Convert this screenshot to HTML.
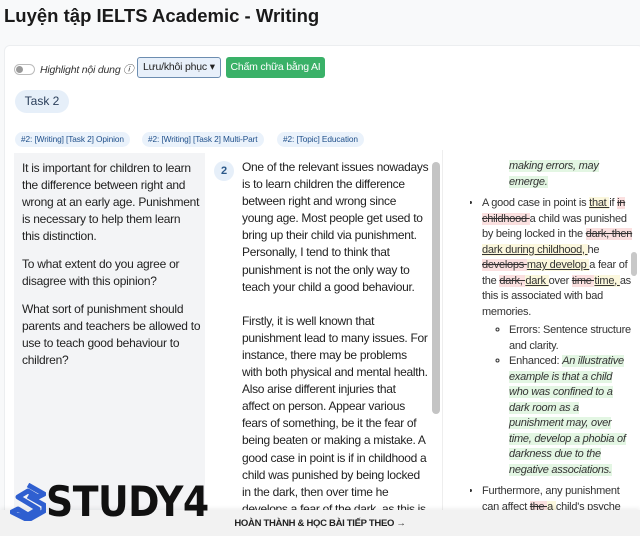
<!DOCTYPE html>
<html><head><meta charset="utf-8"><style>
*{box-sizing:border-box;margin:0;padding:0}
html,body{width:640px;height:536px;overflow:hidden}
body{background:#f8f9fa;font-family:"Liberation Sans","Noto Sans CJK SC",sans-serif;color:#212529;position:relative}
h1{position:absolute;left:4px;top:5px;font-size:18.5px;font-weight:bold;color:#1a1a1a}
.card{position:absolute;left:4px;top:45px;width:640px;height:480px;background:#fff;border:1px solid #eceef0;border-radius:6px}
.abs{position:absolute;white-space:nowrap}
.tog{left:14px;top:64px;width:21px;height:11px;border:1px solid #bbb;border-radius:6px;background:#fff}
.tog:after{content:"";position:absolute;left:1px;top:1px;width:7px;height:7px;border-radius:50%;background:#999}
.hl{left:40px;top:62px;font-size:10.5px;font-style:italic;color:#333;letter-spacing:-.2px}
.btn1{left:137px;top:57px;width:84px;height:21px;border:1px solid #6c8db0;background:#e8f0fa;border-radius:3px;font-size:10.5px;line-height:19px;padding-left:5px;color:#222;letter-spacing:-.2px}
.btn2{left:226px;top:57px;width:99px;height:21px;background:#3ab168;border-radius:3px;font-size:10.5px;line-height:21px;text-align:center;color:#fff;letter-spacing:-.2px}
.task{left:15px;top:90px;width:54px;height:23px;background:#e6eff9;border-radius:12px;font-size:12px;line-height:23px;text-align:center;color:#2a3e5a}
.tag{top:132px;height:15px;background:#eaf2fb;border-radius:8px;font-size:8.3px;line-height:15px;padding:0 6px;color:#1f4f8a;letter-spacing:-.1px}
.left{left:14px;top:153px;width:191px;height:357px;background:#f3f4f6;padding:7px 8px;font-size:12px;line-height:17px;color:#222;letter-spacing:-.25px}
.left p{margin-bottom:11px}
.num{left:214px;top:161px;width:20px;height:20px;border-radius:50%;background:#e6eff9;color:#2a5788;font-size:11px;font-weight:bold;line-height:20px;text-align:center}
.mid{left:242px;top:159px;width:190px;height:351px;overflow:hidden;font-size:12px;line-height:17.1px;color:#222;letter-spacing:-.3px}
.mid p{margin-bottom:17px}
.sb{left:432px;top:162px;width:8px;height:252px;background:#c4c4c4;border-radius:4px}
.rp{left:442px;top:150px;width:198px;height:360px;border-left:1px solid #eee;background:#fff}
.right{left:470px;top:159px;width:166px;height:351px;overflow:hidden;font-size:11px;line-height:15.5px;color:#333;letter-spacing:-.25px}
.g{background:#e3f6e3;font-style:italic}
.d{background:#fbe0e0;text-decoration:line-through}
.u{background:#fbf7dd;text-decoration:underline}
ul{list-style:disc;padding-left:12px}
.sb2{left:631px;top:252px;width:6px;height:24px;background:#c8c8c8;border-radius:3px}
.bot{left:0;top:510px;width:640px;height:26px;background:#f2f2f2;font-size:9.5px;font-weight:bold;text-align:center;line-height:28px;color:#222;box-shadow:0 -2px 4px rgba(0,0,0,.06);letter-spacing:-.3px}
.logo{left:46px;top:480px;font-size:42px;font-weight:bold;color:#111;font-family:"DejaVu Sans Condensed","Liberation Sans",sans-serif;line-height:44px;letter-spacing:-.5px}
</style></head><body>
<h1>Luyện tập IELTS Academic - Writing</h1>
<div class="card"></div>
<div class="abs tog"></div>
<div class="abs hl">Highlight nội dung ⓘ</div>
<div class="abs btn1">Lưu/khôi phục ▾</div>
<div class="abs btn2">Chấm chữa bằng AI</div>
<div class="abs task">Task 2</div>
<div class="abs tag" style="left:15px">#2: [Writing] [Task 2] Opinion</div>
<div class="abs tag" style="left:142px">#2: [Writing] [Task 2] Multi-Part</div>
<div class="abs tag" style="left:277px">#2: [Topic] Education</div>
<div class="abs left">
<p>It is important for children to learn<br>the difference between right and<br>wrong at an early age. Punishment<br>is necessary to help them learn<br>this distinction.</p>
<p>To what extent do you agree or<br>disagree with this opinion?</p>
<p>What sort of punishment should<br>parents and teachers be allowed to<br>use to teach good behaviour to<br>children?</p>
</div>
<div class="abs num">2</div>
<div class="abs mid">
<p>One of the relevant issues nowadays<br>is to learn children the difference<br>between right and wrong since<br>young age. Most people get used to<br>bring up their child via punishment.<br>Personally, I tend to think that<br>punishment is not the only way to<br>teach your child a good behaviour.</p>
<p>Firstly, it is well known that<br>punishment lead to many issues. For<br>instance, there may be problems<br>with both physical and mental health.<br>Also arise different injuries that<br>affect on person. Appear various<br>fears of something, be it the fear of<br>being beaten or making a mistake. A<br>good case in point is if in childhood a<br>child was punished by being locked<br>in the dark, then over time he<br>develops a fear of the dark, as this is</p>
</div>
<div class="abs sb"></div>
<div class="abs rp"></div>
<div class="abs right">
<div style="margin-left:39px"><span class="g">making errors, may</span><br><span class="g">emerge.</span></div>
<ul style="margin-top:6px">
<li>A good case in point is <span class="u">that </span>if <span class="d">in</span><br><span class="d">childhood </span>a child was punished<br>by being locked in the <span class="d">dark, then</span><br><span class="u">dark during childhood, </span>he<br><span class="d">develops </span><span class="u">may develop </span>a fear of<br>the <span class="d">dark, </span><span class="u">dark </span>over <span class="d">time </span><span class="u">time, </span>as<br>this is associated with bad<br>memories.
<ul style="list-style:circle;padding-left:27px;margin-top:3px">
<li>Errors: Sentence structure<br>and clarity.</li>
<li>Enhanced: <span class="g">An illustrative</span><br><span class="g">example is that a child</span><br><span class="g">who was confined to a</span><br><span class="g">dark room as a</span><br><span class="g">punishment may, over</span><br><span class="g">time, develop a phobia of</span><br><span class="g">darkness due to the</span><br><span class="g">negative associations.</span></li>
</ul></li>
<li style="margin-top:6px">Furthermore, any punishment<br>can affect <span class="d">the </span><span class="u">a </span>child's psyche</li>
</ul>
</div>
<div class="abs sb2"></div>
<div class="abs bot">HOÀN THÀNH &amp; HỌC BÀI TIẾP THEO →</div>
<svg class="abs" style="left:10px;top:483px" width="36" height="38" viewBox="0 0 36 38"><path d="M18 2 L34 11 L28 14 L18 8 L8 14 L18 20 L28 26 L18 32 L8 26 L2 29 L18 37 L34 28 L34 22 L18 13" fill="none" stroke="#2f5fd0" stroke-width="5" stroke-linejoin="round"/></svg>
<div class="abs logo">STUDY4</div>
</body></html>
